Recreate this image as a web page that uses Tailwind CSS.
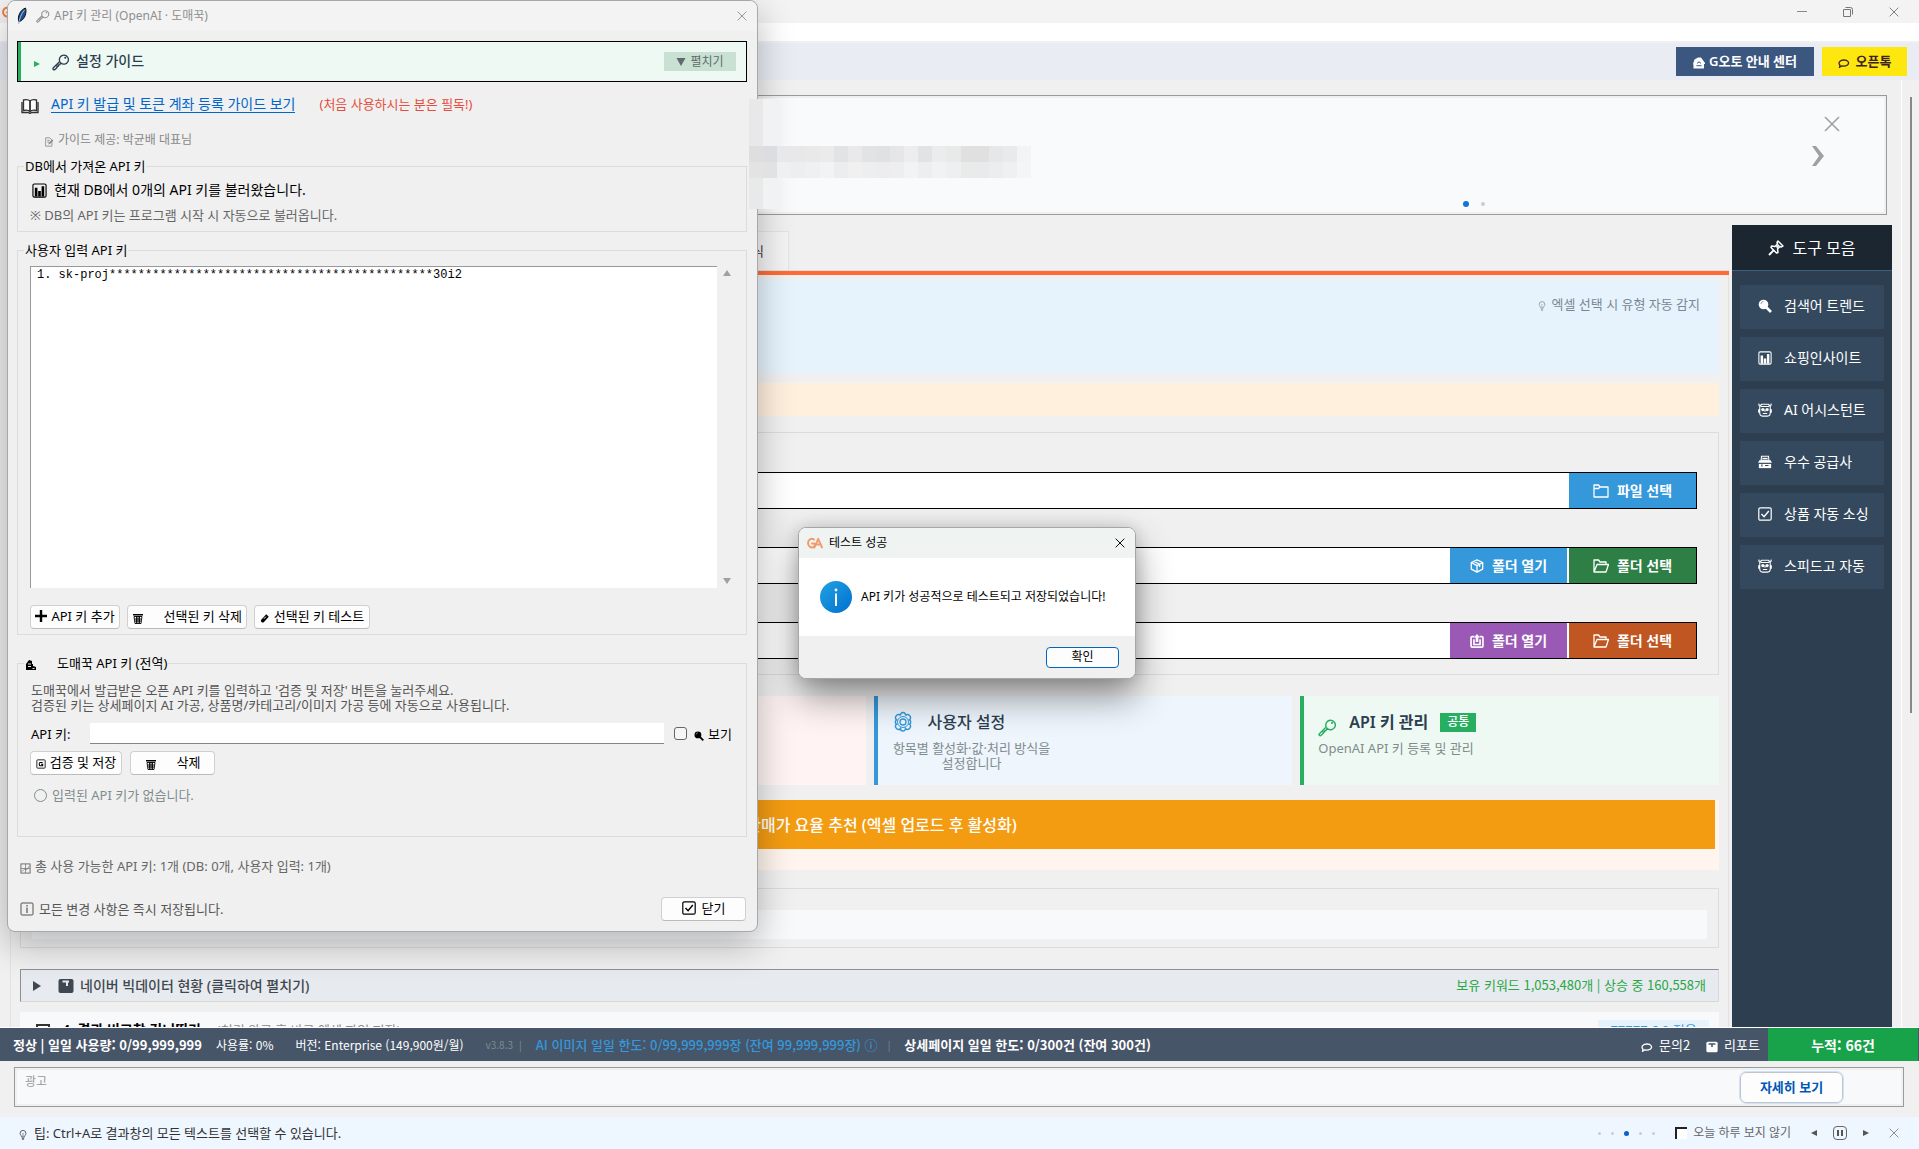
<!DOCTYPE html>
<html lang="ko">
<head>
  <meta charset="UTF-8" />
  <meta name="viewport" content="width=device-width, initial-scale=1.0"/>
  <title>G오토</title>
  <script src="https://cdn.jsdelivr.net/npm/@tailwindcss/browser@4"></script>
</head>
<body class="relative flex h-screen flex-col overflow-hidden bg-[#f0f0f0] font-['Noto_Sans','Noto_Sans_CJK_KR',sans-serif] text-[13px] leading-5 text-black">

  <!-- Icon set -->
  <svg class="hidden" xmlns="http://www.w3.org/2000/svg">
    <symbol id="i-x" viewBox="0 0 16 16"><path d="M1 1l14 14M15 1L1 15" fill="none" stroke="currentColor" stroke-width="1.500"/></symbol>
    <symbol id="i-key" viewBox="0 0 16 16"><path d="M7.600 8.600A4 4 0 1 0 6.900 7.500L1.200 13.200a1 1 0 0 0 0 1.400 1 1 0 0 0 1.400 0L4.400 13V11.800H5.600V10.600H6.800z" fill="none" stroke="currentColor" stroke-width="1.200" stroke-linejoin="round"/><circle cx="11.800" cy="4.200" r=".9" fill="currentColor"/></symbol>
    <symbol id="i-ga" viewBox="0 0 16 12"><path d="M7 2.600C4 .4 1 3 1 6s2.500 5 5 4.400C7.800 10 8 8 7.500 6.500H5M7.500 10.500L11.200 1.800 15 10.500M9.500 7.500h4" fill="none" stroke="currentColor" stroke-width="1.900" stroke-linecap="round" stroke-linejoin="round"/></symbol>
    <symbol id="i-book" viewBox="0 0 18 16"><path d="M9 3C7.500 1.500 4.500 1.500 2.500 2v10.500c2-.5 5-.5 6.500 1 1.500-1.500 4.500-1.500 6.500-1V2C13.500 1.500 10.500 1.500 9 3zv10" fill="#fff" stroke="currentColor" stroke-width="1.300"/><path d="M9 3v10.500M1 4v10.500h6.500l1.500 1 1.500-1H17V4" fill="none" stroke="currentColor" stroke-width="1.400"/></symbol>
    <symbol id="i-memo" viewBox="0 0 12 12"><path d="M2 1h5l2.500 2.500V11H2zM4 4h3M4 6h2" fill="none" stroke="currentColor"/><path d="M5 9l1-2.500L10 3l1.200 1.200L7.500 8z" fill="currentColor"/></symbol>
    <symbol id="i-chart" viewBox="0 0 16 16"><rect x="1" y="1" width="14" height="14" rx="1.500" fill="none" stroke="currentColor" stroke-width="1.200"/><path d="M3 5h2.800v9.500H3zM6.600 8.500h2.800v6H6.600zM10.200 3.500H13v11h-2.800z" fill="currentColor"/></symbol>
    <symbol id="i-plus" viewBox="0 0 12 12"><path d="M6 0v12M0 6h12" stroke="currentColor" stroke-width="2.400"/></symbol>
    <symbol id="i-trash" viewBox="0 0 12 12"><path d="M1 2.500h10M2 4.500h8l-1 7H3zM4.500 4v7M6 4v7M7.500 4v7M2.500 7h7M3 9h6" fill="none" stroke="currentColor" stroke-width=".9"/><path d="M1 2h10v1.500H1z" fill="currentColor"/></symbol>
    <symbol id="i-tube" viewBox="0 0 12 12"><path d="M7.500 1.500l3 3L4.500 11C3 12.500 0 10 1.500 8z" fill="currentColor"/><path d="M4.800 6.800l2.300-2.400" stroke="#fff" stroke-width="1.200"/></symbol>
    <symbol id="i-shop" viewBox="0 0 12 12"><path d="M1 5l3-4 3 1v3h1v2l3 1v3H1z" fill="currentColor"/><path d="M3 5h3M3 7.500h3M7.500 9.500h2" stroke="#fff" stroke-width=".9"/></symbol>
    <symbol id="i-mag" viewBox="0 0 14 14"><circle cx="5.500" cy="5.500" r="4.800" fill="currentColor"/><path d="M8.500 8.500L13 13" stroke="currentColor" stroke-width="2.600"/><path d="M3 5a2.600 2.600 0 0 1 2.500-2.500" stroke="#999" fill="none"/></symbol>
    <symbol id="i-save" viewBox="0 0 12 12"><rect x="1" y="1" width="10" height="10" rx="1" fill="none" stroke="currentColor"/><path d="M8 4.200H5c-1.500 0-1.500 4 0 4h3V6.300H6" fill="none" stroke="currentColor" stroke-width="1.300"/></symbol>
    <symbol id="i-graph" viewBox="0 0 12 12"><rect x="1" y="1" width="10" height="10" fill="none" stroke="currentColor"/><path d="M1 6h10M6 1v10M2 9.500L5 6.500l2 1L10.500 3" fill="none" stroke="currentColor" stroke-width=".7"/></symbol>
    <symbol id="i-info" viewBox="0 0 14 14"><rect x="1" y="1" width="12" height="12" rx="1" fill="none" stroke="currentColor"/><path d="M7 3v1.500M7 5.500v5.500" stroke="currentColor" stroke-width="1.200"/></symbol>
    <symbol id="i-check" viewBox="0 0 14 14"><rect x=".8" y=".8" width="12.400" height="12.400" rx="1.500" fill="none" stroke="currentColor" stroke-width="1.200"/><path d="M3.500 7l2.600 2.800L10.800 4" fill="none" stroke="currentColor" stroke-width="1.400"/></symbol>
    <symbol id="i-home" viewBox="0 0 12 12"><path d="M0 7l1.500-4.500L5 .5h3L12 6v1h-1v4.500H.5V8z" fill="currentColor"/><path d="M4.500 6.500a1.500 1.500 0 0 1 3 0M3.500 8.700h5" fill="none" stroke="#3b5780"/></symbol>
    <symbol id="i-talk" viewBox="0 0 12 10"><path d="M3.500 8L1.600 9.200 2 7.200C-.3 4.700 2 2 6 2s5.800 3 3.500 4.900C8 8.100 5.500 8.300 3.500 8z" fill="none" stroke="currentColor" stroke-width="1.300"/></symbol>
    <symbol id="i-bulb" viewBox="0 0 10 12"><path d="M3.500 8.500C3.500 7 1.500 6 1.500 4a3.500 3.500 0 0 1 7 0c0 2-2 3-2 4.500zM3.500 10h3M4 11.500h2" fill="none" stroke="currentColor" stroke-width=".9"/><path d="M4 4l1 1 1-1M5 5v3" fill="none" stroke="currentColor" stroke-width=".6"/></symbol>
    <symbol id="i-pin" viewBox="0 0 16 16"><path d="M10 1l5 5-1.500 1L12 6.500 9.500 9l.5 3.500L8.500 13 3 7.500 3.500 6 7 6.500 9.500 4 9 2.500z" fill="none" stroke="currentColor" stroke-width="1.500" stroke-linejoin="round"/><path d="M5.800 10.200L1 15M8.500 7.500L11 5" stroke="currentColor" stroke-width="1.900"/></symbol>
    <symbol id="i-robot" viewBox="0 0 16 16"><path d="M1 .5v2h3M15 .5v2h-3M4 1.500h8l2 2.500v7.500c0 2-1 3.500-3 3.500H5c-2 0-3-1.500-3-3.500V4zM.8 7v4M15.200 7v4" fill="none" stroke="currentColor" stroke-width="1.200"/><circle cx="5.600" cy="7.500" r="1.900" fill="currentColor"/><circle cx="10.400" cy="7.500" r="1.900" fill="currentColor"/><path d="M8 7.500V10M5.500 12h5M3 4h10" stroke="currentColor" stroke-width="1.200"/></symbol>
    <symbol id="i-factory" viewBox="0 0 16 16"><path d="M4 1.500h8L12.500 6h-9z" fill="none" stroke="currentColor" stroke-width="1.200"/><path d="M5 4h6" stroke="currentColor" stroke-width="1.600"/><path d="M1.500 6h13L16 9H0z" fill="currentColor"/><path d="M1 10h14v5H1z" fill="currentColor"/><path d="M4.500 10.500v3M8 12h4M0 9.500h16" stroke="#35495e" stroke-width="1.200"/></symbol>
    <symbol id="i-folder" viewBox="0 0 16 14"><path d="M1 13V1h4.500l1.500 2h8v10zM1 4.500h4.500L7 3" fill="none" stroke="currentColor" stroke-width="1.300" stroke-linejoin="round"/></symbol>
    <symbol id="i-open" viewBox="0 0 16 14"><path d="M1 13V1h4.500l1.500 2h6v2.500M1 13l3-7.500h11.500L13 13z" fill="none" stroke="currentColor" stroke-width="1.300" stroke-linejoin="round"/></symbol>
    <symbol id="i-box" viewBox="0 0 16 16"><path d="M8 1l6.500 3v7.500L8 15l-6.500-3.500V4zM1.500 4L8 7.500 14.500 4M8 7.500V15M4.500 2.700l6.500 3.300v3" fill="none" stroke="currentColor" stroke-width="1.500" stroke-linejoin="round"/></symbol>
    <symbol id="i-out" viewBox="0 0 16 16"><path d="M5 3H2.500Q1.200 3 1.200 4.300v9.400q0 1.300 1.300 1.300h11q1.300 0 1.300-1.300V4.300q0-1.300-1.300-1.300H11M4.500 6v6h7V6" fill="none" stroke="currentColor" stroke-width="1.900"/><path d="M8 0l3.500 4H9.500v5h-3V4h-2z" fill="currentColor"/></symbol>
    <symbol id="i-gear" viewBox="0 0 22 22"><path d="M11 1.500a2.500 2.500 0 0 1 2.500 3 2.500 2.500 0 0 1 4.200.3 2.500 2.500 0 0 1-.3 4 2.500 2.500 0 0 1 0 4.400 2.500 2.500 0 0 1 .3 4 2.500 2.500 0 0 1-4.200.3 2.500 2.500 0 0 1-5 0 2.500 2.500 0 0 1-4.200-.3 2.500 2.500 0 0 1 .3-4 2.500 2.500 0 0 1 0-4.400 2.500 2.500 0 0 1-.3-4 2.500 2.500 0 0 1 4.200-.3A2.500 2.500 0 0 1 11 1.500z" fill="none" stroke="currentColor" stroke-width="1.500"/><circle cx="11" cy="11" r="5.500" fill="none" stroke="currentColor"/><circle cx="11" cy="11" r="3" fill="none" stroke="currentColor" stroke-width="1.300"/></symbol>
    <symbol id="i-report" viewBox="0 0 16 16"><rect x=".5" y="1" width="15" height="14" rx="2" fill="currentColor"/><path d="M4.500 3.500h6.500M9 3.500V8" stroke="#e7eaee" stroke-width="2"/></symbol>
    <symbol id="i-report-dark" viewBox="0 0 16 16"><rect x=".5" y="1" width="15" height="14" rx="2" fill="currentColor"/><path d="M3.500 4h9M8 4v4" stroke="#475569" stroke-width="2"/></symbol>
    <symbol id="i-feather" viewBox="0 0 12 18"><path d="M3 15C1 10 4 3 9.500 1c1.500 4-.5 11-5 13z" fill="#1d4f8f" stroke="#111"/><path d="M8.500 3C5 7 3.500 12 2.500 17" fill="none" stroke="#9cc3ee"/></symbol>
  </svg>

  <!-- Title bar -->
  <header class="flex h-[23px] shrink-0 items-center justify-between bg-[#f3f3f3] pl-0.5 pr-5 text-[#777]">
    <svg class="h-3 w-4 text-[#f47b3c]"><use href="#i-ga"/></svg>
    <div class="flex items-center gap-9">
      <button aria-label="최소화" class="h-px w-2.5 bg-[#888]"></button>
      <button aria-label="이전 크기로" class="h-2.5 w-2.5"><svg viewBox="0 0 10 10" class="h-2.5 w-2.5"><path d="M.5 2.500h7v7h-7zM2.500 .5h5q2 0 2 2v5" fill="none" stroke="currentColor"/></svg></button>
      <button aria-label="닫기" class="h-2.5 w-2.5"><svg class="h-2.5 w-2.5"><use href="#i-x"/></svg></button>
    </div>
  </header>
  <div class="h-[18px] shrink-0 bg-white"></div>

  <!-- Header links -->
  <div class="flex h-[39px] shrink-0 items-start justify-end gap-2 border-t-2 border-[#f0f0f0] bg-[#e9edf3] pr-3 pt-1 font-semibold">
    <button class="flex h-[29px] w-[138px] items-center justify-center gap-1 bg-[#3b5780] pb-0.5 text-white"><svg class="mt-1 h-3 w-3"><use href="#i-home"/></svg>G오토 안내 센터</button>
    <button class="flex h-[29px] w-[85px] items-center justify-center gap-1.5 bg-[#fee70f] pb-0.5 text-[#3c2323]"><svg class="mt-1 h-2.5 w-3"><use href="#i-talk"/></svg>오픈톡</button>
  </div>

  <main class="flex min-h-0 flex-1">
    <div class="flex min-w-0 flex-1 flex-col border-r border-white">
      <!-- Notice banner -->
      <section class="relative ml-5 mr-3.5 mt-[15px] h-[120px] shrink-0 border border-[#9a9a9a] bg-[#f9fafc] outline-2 -outline-offset-3 outline-[#f0f0f0]">
        <button aria-label="공지 닫기" class="absolute right-[46px] top-5 text-[#9e9e9e]"><svg class="h-4 w-4"><use href="#i-x"/></svg></button>
        <button aria-label="다음" class="absolute right-[62px] top-[50px] text-[#a0a0a0]"><svg viewBox="0 0 12 20" class="h-5 w-3"><path d="M0 0h4l8 10-8 10H0l7-10z" fill="currentColor"/></svg></button>
        <div class="absolute bottom-[7px] right-[401px] flex items-center gap-3">
          <span class="h-1.5 w-1.5 rounded-full bg-[#1473d6]"></span>
          <span class="h-1 w-1 rounded-full bg-[#ccc]"></span>
        </div>
      </section>

      <div class="mt-2.5 flex min-h-0 flex-1">
        <!-- Work area -->
        <div class="ml-2.5 flex min-w-0 flex-1 flex-col">
          <div class="flex h-[46px] shrink-0 items-end border-b border-[#dedede]">
            <div class="flex h-[39px] w-[779px] items-center justify-end border border-b-0 border-[#e3e3e3] bg-[#f3f3f3] pr-6 text-[#333]">식</div>
          </div>
          <div class="h-1 shrink-0 bg-[#ff6b35]"></div>
          <div class="flex min-h-0 flex-1 flex-col overflow-hidden border-x border-[#e2e2e2] pl-[9px] pr-[9px] pt-[5px]">
            <section class="flex h-[93px] shrink-0 justify-end bg-[#e6f3fd] pr-[19px] pt-3.5 text-[#7a8794]">
              <div class="flex h-5 items-center gap-1.5"><svg class="mt-1 h-2.5 w-2"><use href="#i-bulb"/></svg>엑셀 선택 시 유형 자동 감지</div>
            </section>
            <div class="mt-2.5 h-[33px] shrink-0 bg-[#fff0de]"></div>

            <!-- File pickers -->
            <section class="mt-4 h-[243px] shrink-0 border border-[#dcdcdc] px-[21px] pt-[39px] text-sm font-semibold text-white">
              <div class="flex h-[37px] border border-black bg-white">
                <input aria-label="엑셀 파일" class="min-w-0 flex-1 px-2 text-black" />
                <button class="flex w-[127px] items-center justify-center gap-2 bg-[#3498db]"><svg class="h-3.5 w-4"><use href="#i-folder"/></svg>파일 선택</button>
              </div>
              <div class="mt-[38px] flex h-[37px] gap-0.5 border border-black bg-white">
                <input aria-label="결과 폴더" class="min-w-0 flex-1 px-2 text-black" />
                <button class="flex w-[117px] items-center justify-center gap-2 bg-[#3498db]"><svg class="h-3.5 w-3.5"><use href="#i-box"/></svg>폴더 열기</button>
                <button class="flex w-[127px] items-center justify-center gap-2 bg-[#2d7f46]"><svg class="h-3.5 w-4"><use href="#i-open"/></svg>폴더 선택</button>
              </div>
              <div class="mt-[38px] flex h-[37px] gap-0.5 border border-black bg-white">
                <input aria-label="이미지 폴더" class="min-w-0 flex-1 px-2 text-black" />
                <button class="flex w-[117px] items-center justify-center gap-2 bg-[#9b59b6]"><svg class="h-3.5 w-3.5"><use href="#i-out"/></svg>폴더 열기</button>
                <button class="flex w-[127px] items-center justify-center gap-2 bg-[#c05621]"><svg class="h-3.5 w-4"><use href="#i-open"/></svg>폴더 선택</button>
              </div>
            </section>

            <!-- Setting cards -->
            <section class="mt-[21px] grid h-[89px] shrink-0 grid-cols-4 gap-2 leading-[15px] text-[#7f8c8d]">
              <div class="border-l-4 border-[#e67e22] bg-[#fff6ec]"></div>
              <div class="border-l-4 border-[#e74c3c] bg-[#fff4f3]"></div>
              <div class="border-l-4 border-[#3498db] bg-[#eef5fc] pl-3.5 pt-3.5">
                <div class="flex h-6 items-center gap-3.5 text-base font-medium text-[#2c3e50]"><svg class="h-[22px] w-[22px] text-[#3498db]"><use href="#i-gear"/></svg>사용자 설정</div>
                <p class="mt-[7px] w-40 text-center">항목별 활성화·값·처리 방식을<br>설정합니다</p>
              </div>
              <div class="border-l-4 border-[#27ae60] bg-[#eff9f3] pl-3.5 pt-3.5">
                <div class="flex h-6 items-center gap-3 text-base font-semibold text-[#2c3e50]"><svg class="mt-2.5 h-[19px] w-[19px] text-[#27ae60]"><use href="#i-key"/></svg>API 키 관리 <span class="flex h-[19px] w-9 items-center justify-center bg-[#27ae60] text-xs font-medium text-white">공통</span></div>
                <p class="mt-[7px]">OpenAI API 키 등록 및 관리</p>
              </div>
            </section>

            <div class="mt-[15px] h-[70px] shrink-0 bg-[#fff5ee] pr-1">
              <button class="flex h-[49px] w-full items-center justify-center gap-3 bg-[#f39c12] pr-1 text-base font-medium text-white"><svg class="h-5 w-5"><use href="#i-chart"/></svg>판매가 요율 추천 (엑셀 업로드 후 활성화)</button>
            </div>

            <div class="mt-[18px] h-[60px] shrink-0 border border-[#dcdcdc] px-[11px] pt-[21px]">
              <div class="flex h-[29px] items-center bg-[#f8f9fb] pl-3.5"><span class="h-3.5 w-2.5 bg-[#3498db]"></span></div>
            </div>

            <button class="mt-[21px] flex h-[33px] shrink-0 items-center border border-b-[#d8d8d8] border-l-[#8f8f8f] border-r-[#d8d8d8] border-t-[#8f8f8f] bg-[#e7eaee] pl-3 pr-3 text-sm font-medium text-[#3f4850]">
              <svg viewBox="0 0 8 10" class="h-2.5 w-2"><path d="M0 0l8 5-8 5z" fill="currentColor"/></svg>
              <svg class="ml-[17px] mr-1.5 h-4 w-4"><use href="#i-report"/></svg>
              네이버 빅데이터 현황 (클릭하여 펼치기)
              <span class="ml-auto font-['Noto_Sans_CJK_KR',sans-serif] text-[13px] font-normal text-[#28a745]">보유 키워드 1,053,480개 | 상승 중 160,558개</span>
            </button>

            <div class="mt-2.5 flex h-12 shrink-0 items-start bg-[#f8f9fb] pl-4 pr-2.5 pt-2">
              <input type="checkbox" aria-label="결과 비교창 건너뛰기" class="mt-1 h-3.5 w-3.5 appearance-none border-2 border-[#333] bg-white" />
              <span class="ml-3 text-sm font-bold">4. 결과 비교창 건너뛰기</span>
              <span class="ml-4 text-[#888]">(처리 완료 후 바로 엑셀 파일 저장)</span>
              <span class="ml-auto h-6 w-[111px] bg-[#e6f3fd] text-center text-[#3498db]">ZZZZZ 6.0 적용</span>
            </div>
          </div>
        </div>

        <!-- Tools -->
        <aside class="ml-[3px] mr-[9px] w-40 shrink-0 bg-[#2d3e50] text-sm text-white">
          <h2 class="flex h-[46px] items-center justify-center gap-2 border-b border-[#3d5f80] bg-[#1c2630] text-base"><svg class="h-4 w-4"><use href="#i-pin"/></svg>도구 모음</h2>
          <nav class="flex flex-col gap-2 px-2 pt-3.5">
            <button class="flex h-11 items-center gap-3 bg-[#35495e] pb-0.5 pl-[18px]"><svg class="h-3.5 w-3.5"><use href="#i-mag"/></svg>검색어 트렌드</button>
            <button class="flex h-11 items-center gap-3 bg-[#35495e] pb-0.5 pl-[18px]"><svg class="h-3.5 w-3.5"><use href="#i-chart"/></svg>쇼핑인사이트</button>
            <button class="flex h-11 items-center gap-3 bg-[#35495e] pb-0.5 pl-[18px]"><svg class="h-3.5 w-3.5"><use href="#i-robot"/></svg>AI 어시스턴트</button>
            <button class="flex h-11 items-center gap-3 bg-[#35495e] pb-0.5 pl-[18px]"><svg class="h-3.5 w-3.5"><use href="#i-factory"/></svg>우수 공급사</button>
            <button class="flex h-11 items-center gap-3 bg-[#35495e] pb-0.5 pl-[18px]"><svg class="h-3.5 w-3.5"><use href="#i-check"/></svg>상품 자동 소싱</button>
            <button class="flex h-11 items-center gap-3 bg-[#35495e] pb-0.5 pl-[18px]"><svg class="h-3.5 w-3.5"><use href="#i-robot"/></svg>스피드고 자동</button>
          </nav>
        </aside>
      </div>
    </div>
    <!-- Scrollbar -->
    <div class="w-[17px] shrink-0 pl-2 pt-[17px]"><div class="h-[616px] w-0.5 bg-[#888]"></div></div>
  </main>

  <!-- Status bar -->
  <footer class="flex h-[34px] shrink-0 items-center border-t border-white bg-[#475569] pl-[13px] font-['Noto_Sans_CJK_KR',sans-serif] text-white">
    <b class="font-bold">정상 | 일일 사용량: 0/99,999,999</b>
    <span class="ml-3.5 text-xs">사용률: 0%</span>
    <span class="ml-[22px] text-xs">버전: Enterprise (149,900원/월)</span>
    <span class="ml-[22px] text-[10px] text-[#7f8c8d]">v3.8.3</span>
    <span class="ml-1.5 text-[10px] text-[#7f8c8d]">|</span>
    <span class="ml-3.5 font-medium text-[#3498db]">AI 이미지 일일 한도: 0/99,999,999장 (잔여 99,999,999장) ⓘ</span>
    <span class="ml-2.5 text-[10px] text-[#7f8c8d]">|</span>
    <span class="ml-3.5 font-semibold">상세페이지 일일 한도: 0/300건 (잔여 300건)</span>
    <button class="ml-auto flex items-center gap-1.5"><svg class="mt-1 h-2.5 w-3"><use href="#i-talk"/></svg>문의2</button>
    <button class="ml-4 mr-2 flex items-center gap-1.5"><svg class="mt-1 h-3 w-3"><use href="#i-report-dark"/></svg>리포트</button>
    <div class="mr-px flex h-full w-[150px] items-center justify-center bg-[#18a34a] text-sm font-semibold">누적: 66건</div>
  </footer>

  <!-- Ad -->
  <section class="ml-3.5 mr-[15px] mt-1.5 flex h-[40px] shrink-0 items-start border border-[#9a9a9a] bg-[#f8f9fb] pl-2.5 pr-[60px] outline-2 -outline-offset-3 outline-[#f0f0f0]">
    <span class="mt-1.5 text-xs text-[#999]">광고</span>
    <button class="ml-auto mt-1 h-[31px] w-[103px] rounded-md border border-[#c4c4c4] bg-[#fdfdfd] pb-0.5 font-semibold text-[#0057b8] outline-1 outline-[#cce4ff]">자세히 보기</button>
  </section>

  <!-- Tip -->
  <div class="mt-2.5 flex h-8 shrink-0 items-center bg-[#eef6ff] pl-[18px] pr-5 text-[#333]">
    <svg class="mr-1.5 mt-1 h-2.5 w-2.5"><use href="#i-bulb"/></svg>팁: Ctrl+A로 결과창의 모든 텍스트를 선택할 수 있습니다.
    <div class="ml-auto flex items-center gap-2.5">
      <span class="h-[3px] w-[3px] rounded-full bg-[#ccc]"></span>
      <span class="h-[3px] w-[3px] rounded-full bg-[#ccc]"></span>
      <span class="h-[5px] w-[5px] rounded-full bg-[#0b62c4]"></span>
      <span class="h-[3px] w-[3px] rounded-full bg-[#ccc]"></span>
      <span class="h-[3px] w-[3px] rounded-full bg-[#ccc]"></span>
    </div>
    <label class="ml-5 flex items-center gap-1.5 text-xs text-[#666]"><input type="checkbox" class="h-3 w-3 appearance-none border-l-2 border-t-2 border-[#222] bg-white" />오늘 하루 보지 않기</label>
    <button aria-label="이전 팁" class="ml-5 text-[#555]"><svg viewBox="0 0 6 6" class="h-1.5 w-1.5"><path d="M6 0v6L0 3z" fill="currentColor"/></svg></button>
    <button aria-label="일시정지" class="ml-4 flex h-3.5 w-3.5 items-center justify-center gap-0.5 rounded-sm border border-[#666]"><i class="h-1.5 w-0.5 bg-[#555]"></i><i class="h-1.5 w-0.5 bg-[#555]"></i></button>
    <button aria-label="다음 팁" class="ml-4 text-[#555]"><svg viewBox="0 0 6 6" class="h-1.5 w-1.5"><path d="M0 0v6l6-3z" fill="currentColor"/></svg></button>
    <button aria-label="팁 닫기" class="ml-5 text-[#888]"><svg class="h-2.5 w-2.5"><use href="#i-x"/></svg></button>
  </div>

  <!-- API key window -->
  <div role="dialog" aria-label="API 키 관리" class="absolute left-[7px] top-0 w-[751px] rounded-lg border border-[#a8a8a8] bg-[#f0f0f0] pb-2.5 shadow-[0_12px_36px_rgba(0,0,0,0.28)]">
    <div class="flex h-[30px] items-center rounded-t-lg bg-[#f3f3f3] pl-2 pr-2.5 text-xs text-[#8f8f8f]">
      <svg class="h-[18px] w-3"><use href="#i-feather"/></svg>
      <svg class="ml-2 mr-1 h-3.5 w-3.5"><use href="#i-key"/></svg>API 키 관리 (OpenAI · 도매꾹)
      <button aria-label="닫기" class="ml-auto"><svg class="h-2.5 w-2.5"><use href="#i-x"/></svg></button>
    </div>
    <div class="pl-[9px] pr-2.5 pt-2.5">
      <div class="flex h-[41px] items-center border border-black bg-[#eff9f3] pr-2.5">
        <span class="h-full w-[3px] bg-[#27ae60]"></span>
        <svg viewBox="0 0 6 6" class="ml-[13px] mt-1 h-1.5 w-1.5 text-[#27ae60]"><path d="M0 0l6 3-6 3z" fill="currentColor"/></svg>
        <svg class="ml-3 mr-1.5 h-[18px] w-[18px] text-[#2c3e50]"><use href="#i-key"/></svg>
        <h2 class="pb-0.5 text-sm font-medium text-[#2c3e50]">설정 가이드</h2>
        <button class="ml-auto flex h-[19px] w-[72px] items-center justify-center gap-1 bg-[#c8e1d2] text-xs text-[#5f6b6b]"><svg viewBox="0 0 9 8" class="h-2 w-2.5"><path d="M0 0h9L4.500 8z" fill="currentColor"/></svg>펼치기</button>
      </div>

      <div class="mt-2.5 flex h-6 items-center pl-1">
        <svg class="mt-1 h-4 w-[18px] text-[#333]"><use href="#i-book"/></svg>
        <a href="#guide" class="ml-3 border-b border-[#0066cc] text-sm leading-[17px] text-[#0066cc]">API 키 발급 및 토큰 계좌 등록 가이드 보기</a>
        <span class="ml-6 text-[#e74c3c]">(처음 사용하시는 분은 필독!)</span>
      </div>
      <div class="mt-3.5 flex h-5 items-center pl-[27px] text-xs text-[#888]"><svg class="mr-1 mt-1 h-2.5 w-2.5"><use href="#i-memo"/></svg>가이드 제공: 박균배 대표님</div>

      <fieldset class="mt-2 h-[74px] border border-[#dcdcdc] px-3">
        <legend class="-ml-1.5 px-px leading-4">DB에서 가져온 API 키</legend>
        <div class="mt-1.5 flex h-5 items-center gap-[7px] pl-0.5 text-sm"><svg class="h-[15px] w-[15px]"><use href="#i-chart"/></svg>현재 DB에서 0개의 API 키를 불러왔습니다.</div>
        <p class="mt-[5px] text-[#666]">※ DB의 API 키는 프로그램 시작 시 자동으로 불러옵니다.</p>
      </fieldset>

      <fieldset class="mt-2.5 h-[393px] border border-[#dcdcdc] px-3">
        <legend class="-ml-1.5 px-px leading-4">사용자 입력 API 키</legend>
        <div class="mt-2 flex h-[322px]">
          <ul class="w-[687px] border-l border-t border-[#999] bg-white pl-1.5 font-['Liberation_Mono',monospace] text-xs leading-4"><li>1. sk-proj*********************************************30i2</li></ul>
          <div class="flex flex-1 flex-col items-center justify-between py-1 pl-0.5 text-[#a0a0a0]">
            <svg viewBox="0 0 8 6" class="h-1.5 w-2"><path d="M4 0l4 6H0z" fill="currentColor"/></svg>
            <svg viewBox="0 0 8 6" class="h-1.5 w-2"><path d="M4 6l4-6H0z" fill="currentColor"/></svg>
          </div>
        </div>
        <div class="mt-[17px] flex gap-[7px]">
          <button class="flex h-6 w-[90px] items-center justify-center gap-1 rounded border border-[#d0d0d0] border-b-[#bbb] bg-[#fdfdfd] pb-0.5"><svg class="h-3 w-3"><use href="#i-plus"/></svg>API 키 추가</button>
          <button class="flex h-6 w-[120px] items-center justify-between rounded border border-[#d0d0d0] border-b-[#bbb] bg-[#fdfdfd] px-1 pb-0.5"><svg class="mt-1 h-3 w-3"><use href="#i-trash"/></svg>선택된 키 삭제</button>
          <button class="flex h-6 w-[116px] items-center justify-center gap-1 rounded border border-[#d0d0d0] border-b-[#bbb] bg-[#fdfdfd] pb-0.5"><svg class="mt-1 h-2.5 w-2.5"><use href="#i-tube"/></svg>선택된 키 테스트</button>
        </div>
      </fieldset>

      <fieldset class="mt-5 h-[182px] border border-[#dcdcdc] px-3">
        <legend class="-ml-1.5 px-px leading-4"><span class="flex items-center gap-5"><svg class="mt-1 h-3 w-3"><use href="#i-shop"/></svg>도매꾹 API 키 (전역)</span></legend>
        <p class="mt-3 pl-px leading-[15px] text-[#555]">도매꾹에서 발급받은 오픈 API 키를 입력하고 '검증 및 저장' 버튼을 눌러주세요.<br>검증된 키는 상세페이지 AI 가공, 상품명/카테고리/이미지 가공 등에 자동으로 사용됩니다.</p>
        <div class="mt-2.5 flex h-[21px] items-center pl-px">
          <label for="domekey" class="w-[59px] shrink-0">API 키:</label>
          <input id="domekey" type="password" class="h-full min-w-0 flex-1 border-b border-[#868686] bg-white px-1" />
          <label class="ml-2.5 mr-0.5 flex items-center"><input type="checkbox" class="mr-[7px] h-[13px] w-[13px] appearance-none rounded-[3px] border border-[#666] bg-[#f6f6f6]" /><svg class="mr-1 mt-1 h-2.5 w-2.5"><use href="#i-mag"/></svg>보기</label>
        </div>
        <div class="mt-[7px] flex gap-2">
          <button class="flex h-6 w-[92px] items-center justify-center gap-1 rounded border border-[#d0d0d0] border-b-[#bbb] bg-[#fdfdfd] pb-0.5"><svg class="mt-1 h-2.5 w-2.5"><use href="#i-save"/></svg>검증 및 저장</button>
          <button class="flex h-6 w-[85px] items-center justify-center gap-5 rounded border border-[#d0d0d0] border-b-[#bbb] bg-[#fdfdfd] pb-0.5"><svg class="mt-1 h-3 w-3"><use href="#i-trash"/></svg>삭제</button>
        </div>
        <div class="mt-2.5 flex h-5 items-center gap-[5px] pl-1 text-[#7f8c8d]"><span class="h-[13px] w-[13px] rounded-full border border-[#7f8c8d]"></span>입력된 API 키가 없습니다.</div>
      </fieldset>

      <div class="mt-[19px] flex h-5 items-center gap-1 pl-[3px] text-[#666]"><svg class="mt-1 h-[11px] w-[11px]"><use href="#i-graph"/></svg>총 사용 가능한 API 키: 1개 (DB: 0개, 사용자 입력: 1개)</div>
      <div class="mt-[21px] flex h-6 items-center text-[#555]">
        <svg class="ml-[3px] mr-[5px] h-3.5 w-3.5"><use href="#i-info"/></svg>모든 변경 사항은 즉시 저장됩니다.
        <button class="ml-auto mr-px flex h-6 w-[85px] items-center justify-center gap-1.5 rounded border border-[#d0d0d0] border-b-[#bbb] bg-[#fdfdfd] pb-0.5 text-black"><svg class="h-3.5 w-3.5"><use href="#i-check"/></svg>닫기</button>
      </div>
    </div>
  </div>

  <!-- Masked notice text -->
  <div class="absolute left-[749px] top-[99px] w-[282px]">
    <div class="flex h-[47px]"><i class="w-3.5 bg-[#e8e8e8]"></i><i class="w-3.5 bg-[#f1f2f4]"></i></div>
    <div id="mask" class="grid auto-rows-[16px] grid-cols-20"></div>
    <div class="flex h-[31px]"><i class="w-3.5 bg-[#e7eae8]"></i><i class="w-3.5 bg-[#f1f2f4]"></i></div>
  </div>

  <!-- Message box -->
  <div role="alertdialog" aria-label="테스트 성공" class="absolute left-[798px] top-[527px] w-[338px] overflow-hidden rounded-lg border border-[#a6a6a6] bg-white text-xs shadow-[0_18px_36px_rgba(0,0,0,0.42),0_0_16px_rgba(0,0,0,0.14)]">
    <div class="flex h-[30px] items-center bg-[#eff4f3] pl-2 pr-2.5">
      <svg class="mr-1.5 h-3 w-4 text-[#f29a6c]"><use href="#i-ga"/></svg>테스트 성공
      <button aria-label="닫기" class="ml-auto"><svg class="h-2.5 w-2.5"><use href="#i-x"/></svg></button>
    </div>
    <div class="flex h-[78px] items-center gap-[9px] pl-[21px]">
      <svg viewBox="0 0 32 32" class="h-8 w-8"><defs><linearGradient id="blue" x1="0" y1="0" x2="1" y2="1"><stop offset="0" stop-color="#22a2e4"/><stop offset="1" stop-color="#0070cf"/></linearGradient></defs><circle cx="16" cy="16" r="16" fill="url(#blue)"/><path d="M16 12.500V25" stroke="#fff" stroke-width="2"/><circle cx="16" cy="9" r="1.400" fill="#fff"/></svg>
      API 키가 성공적으로 테스트되고 저장되었습니다!
    </div>
    <div class="flex h-[42px] items-center justify-end bg-[#f0f0f0] pr-4">
      <button class="h-[21px] w-[73px] rounded border border-[#0067c0] bg-[#fdfdfd] leading-[18px]">확인</button>
    </div>
  </div>

  <script>
    const shades = [
      "#dedede", "#dcdde0", "#e8e8ea", "#e8e8ea", "#e9e9ea", "#ebebec", "#e2e3e5", "#e9e9eb", "#e2e3e5", "#e0e1e3",
      "#e6e6e8", "#ecedec", "#e2e3e5", "#ebecee", "#e8eae9", "#e0e0e0", "#e0e0e0", "#e6e7e8", "#e9eae9", "#f3f4f6",
      "#e3e3e3", "#e2e2e3", "#eff0f2", "#edeef0", "#eff0f1", "#f2f3f5", "#ecedef", "#eff0ef", "#edeef0", "#ededef",
      "#eeeef0", "#f2f3f5", "#edeef0", "#f1f2f4", "#eeeff1", "#e9ebea", "#e9eaec", "#ecedef", "#eff0f2", "#f4f5f6"
    ];
    const mask = document.getElementById("mask");
    shades.forEach(c => {
      const cell = document.createElement("i");
      cell.style.backgroundColor = c;
      mask.appendChild(cell);
    });
  </script>
</body>
</html>
